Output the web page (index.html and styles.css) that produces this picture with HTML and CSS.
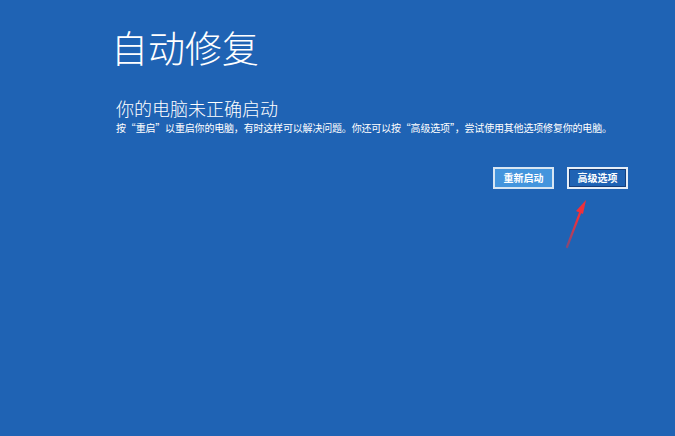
FILE: index.html
```html
<!DOCTYPE html>
<html lang="zh-CN">
<head>
<meta charset="utf-8">
<title>自动修复</title>
<link rel="stylesheet" href="styles.css">
</head>
<body>
<div class="screen">
  <h1 class="title">自动修复</h1>
  <h2 class="subtitle">你的电脑未正确启动</h2>
  <p class="desc">按“重启”以重启你的电脑，有时这样可以解决问题。你还可以按“高级选项”，尝试使用其他选项修复你的电脑。</p>
  <div class="actions">
    <button class="btn btn-primary">重新启动</button>
    <button class="btn btn-secondary">高级选项</button>
  </div>
  <svg class="arrow" width="40" height="60" viewBox="0 0 40 60">
    <defs>
      <linearGradient id="ag" x1="0" y1="1" x2="0.3" y2="0">
        <stop offset="0" stop-color="#e8303a" stop-opacity="0.5"/>
        <stop offset="1" stop-color="#f0303a"/>
      </linearGradient>
    </defs>
    <path d="M10 55 L23 21" stroke="url(#ag)" stroke-width="2.2" stroke-linecap="round" fill="none"/>
    <path d="M29 8 L19 19 L26 22 Z" fill="#f0303a"/>
  </svg>
</div>
</body>
</html>
```
FILE: styles.css
```css
html, body {
  margin: 0;
  padding: 0;
}
body {
  background: #1f63b4;
  width: 675px;
  height: 436px;
  overflow: hidden;
  font-family: "Noto Sans CJK SC", "Noto Sans", sans-serif;
  color: #ffffff;
}
.screen {
  position: relative;
  width: 675px;
  height: 436px;
  box-sizing: border-box;
  padding: 25px 47px 0 113px;
  display: flex;
  flex-direction: column;
}
.title {
  margin: 0 0 0 -2px;
  font-size: 37px;
  font-weight: 300;
  line-height: 44px;
  letter-spacing: 0;
}
.subtitle {
  margin: 28px 0 0 3px;
  font-size: 18px;
  font-weight: 300;
  line-height: 22px;
}
.desc {
  margin: 2px 0 0 3px;
  font-size: 10px;
  line-height: 14px;
  letter-spacing: -0.18px;
  white-space: nowrap;
}
.actions {
  display: flex;
  justify-content: flex-end;
  gap: 13px;
  margin-top: 32px;
}
.btn {
  font-family: inherit;
  font-size: 10px;
  font-weight: 600;
  color: #ffffff;
  width: 61px;
  height: 22px;
  padding: 0;
  box-sizing: border-box;
  line-height: 16px;
}
.btn-primary {
  background: #4495dd;
  border: 2px solid #d8e6f3;
}
.btn-secondary {
  background: #1f63b4;
  border: 2px solid #e6eef7;
  box-shadow: inset 0 0 0 1px #153f7c;
}
.arrow {
  position: absolute;
  left: 557px;
  top: 192px;
}
```
